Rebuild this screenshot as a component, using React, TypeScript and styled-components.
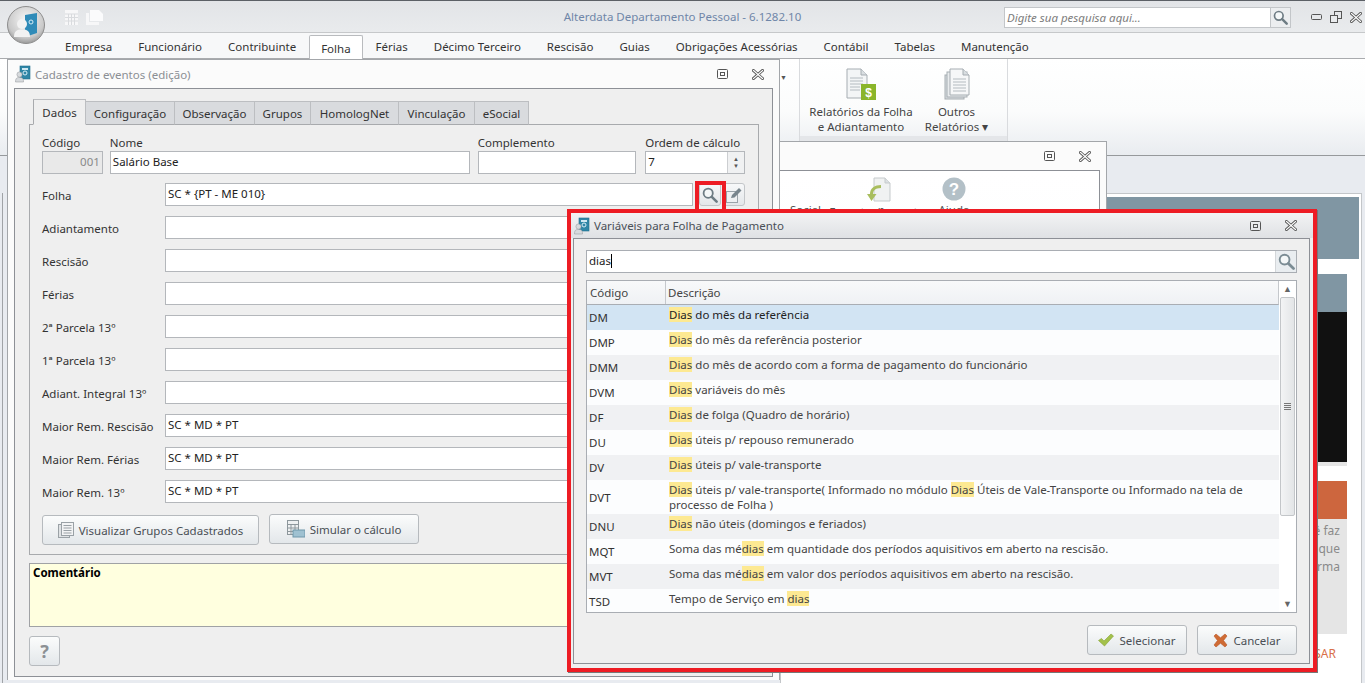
import React from 'react';
import styled, { createGlobalStyle } from 'styled-components';

const GlobalStyle = createGlobalStyle`
    html, body {
        margin: 0;
        padding: 0;
        background: #e8ebf0;
    }
    * {
        box-sizing: border-box;
    }
`;

const Page = styled.div`
    position: relative;
    width: 1365px;
    height: 683px;
    overflow: hidden;
    background: #e8ebf0;
    color: #333;
    font-family: "Noto Sans", "Open Sans", sans-serif;
    font-size: 11.5px;
`;

/* top of the application */
const TitleBar = styled.div`
    position: relative;
    height: 33px;
    display: flex;
    align-items: flex-start;
    border-top: 1px solid #5c6066;
    border-bottom: 1px solid #c6c8ca;
    background: linear-gradient(180deg, #e2e4e7 0%, #e9ebed 100%);
`;

const Orb = styled.div`
    position: absolute;
    left: 7px;
    top: 6px;
    width: 38px;
    height: 38px;
    z-index: 3;
`;

const QuickIcons = styled.div`
    display: flex;
    gap: 8px;
    margin: 9px 0 0 65px;
`;

const AppTitle = styled.div`
    position: absolute;
    left: 0;
    right: 0;
    top: 8px;
    text-align: center;
    color: #6f86a8;
    font-size: 11.5px;
`;

const TopSearch = styled.div`
    display: flex;
    width: 287px;
    height: 21px;
    margin: 6px 0 0 auto;
    border: 1px solid #c3c6c9;
    background: #fff;
`;

const TopSearchText = styled.div`
    flex: 1;
    padding: 2px 2px;
    color: #7d7d7d;
    font-style: italic;
`;

const TopSearchButton = styled.div`
    width: 20px;
    display: flex;
    align-items: center;
    justify-content: center;
    border-left: 1px solid #c3c6c9;
    background: #eceef0;
`;

const WindowButtons = styled.div`
    display: flex;
    gap: 8px;
    margin: 10px 3px 0 20px;
    align-items: center;
`;

const MenuBar = styled.div`
    height: 26px;
    display: flex;
    align-items: flex-end;
    padding-left: 52px;
    border-bottom: 1px solid #a9abae;
    background: #f7f8f9;
`;

const MenuItem = styled.div<{ $active?: boolean }>`
    height: ${({ $active }) => ($active ? '24px' : '22px')};
    margin-bottom: ${({ $active }) => ($active ? '-1px' : '0')};
    padding: ${({ $active }) => ($active ? '5px 11px 0' : '3px 13px 0')};
    color: #333;
    white-space: nowrap;
    background: ${({ $active }) => ($active ? '#fff' : 'transparent')};
    border: ${({ $active }) => ($active ? '1px solid #b9bbbe' : '0')};
    border-bottom: 0;
    border-radius: 2px 2px 0 0;
`;

const Ribbon = styled.div`
    height: 97px;
    display: flex;
    padding-left: 780px;
    border-bottom: 1px solid #96999c;
    background: linear-gradient(180deg, #ffffff 0%, #fbfcfc 55%, #e9ecf0 100%);
`;

const RibbonArrow = styled.div`
    width: 19px;
    padding: 14px 0 0 0;
    color: #555;
    font-size: 7px;
`;

const RibbonGroup = styled.div`
    width: 209px;
    display: flex;
    flex-direction: column;
    border-left: 1px solid #d9dbde;
    border-right: 1px solid #d9dbde;
`;

const RibbonItems = styled.div`
    flex: 1;
    display: flex;
    padding-left: 8px;
`;

const RibbonItem = styled.div<{ $width: number }>`
    width: ${({ $width }) => $width}px;
    display: flex;
    flex-direction: column;
    align-items: center;
    padding-top: 9px;
    text-align: center;
    line-height: 15px;
    color: #444;
`;

const RibbonItemLabel = styled.div`
    margin-top: 4px;
    white-space: nowrap;
`;

const RibbonGroupName = styled.div`
    height: 19px;
    background: #e4e6e9;
    color: #777;
    text-align: center;
    padding-top: 2px;
`;

/* windows on the desktop */
const AppWindow = styled.div<{ $left: number; $top: number; $width: number; $height: number }>`
    position: absolute;
    left: ${({ $left }) => $left}px;
    top: ${({ $top }) => $top}px;
    width: ${({ $width }) => $width}px;
    height: ${({ $height }) => $height}px;
    display: flex;
    flex-direction: column;
    background: #fbfbfb;
    border: 1px solid #a3a6aa;
    border-bottom: 0;
`;

const WindowTitle = styled.div<{ $active?: boolean }>`
    height: 28px;
    display: flex;
    align-items: center;
    gap: 4px;
    padding: 0 15px 0 7px;
    color: ${({ $active }) => ($active ? '#4a5058' : '#8b8f94')};
    background: ${({ $active }) => ($active ? 'linear-gradient(180deg, #f2f3f4 0%, #dfe1e4 100%)' : '#fbfbfb')};
`;

const WindowTitleText = styled.div`
    flex: 1;
    white-space: nowrap;
`;

const TitleButtons = styled.div`
    display: flex;
    align-items: center;
    gap: 24px;
`;

const WindowBody = styled.div`
    flex: 1;
    margin: 0 6px 3px 6px;
    padding: 10px 13px 0 14px;
    border: 1px solid #8d9096;
    background: #efefef;
    display: flex;
    flex-direction: column;
`;

const TabStrip = styled.div`
    display: flex;
    align-items: flex-end;
    height: 26px;
    margin-left: 4px;
    margin-bottom: -1px;
    position: relative;
    z-index: 1;
`;

const Tab = styled.div<{ $width: number; $active?: boolean }>`
    width: ${({ $width }) => $width}px;
    height: ${({ $active }) => ($active ? '26px' : '24px')};
    padding-top: ${({ $active }) => ($active ? '5px' : '4px')};
    text-align: center;
    white-space: nowrap;
    background: ${({ $active }) => ($active ? '#efefef' : '#d9dbde')};
    border: 1px solid #bcbec1;
    border-bottom: ${({ $active }) => ($active ? '1px solid #efefef' : '1px solid #a8aaad')};
    border-left: ${({ $active }) => ($active ? '1px solid #a8aaad' : '0')};
`;

const TabPanel = styled.div`
    height: 431px;
    padding: 11px 13px 0 12px;
    border: 1px solid #a8aaad;
    background: #efefef;
`;

const TopFields = styled.div`
    display: flex;
    margin-bottom: 9px;
`;

const TopField = styled.div<{ $width: number; $gap: number }>`
    width: ${({ $width }) => $width}px;
    margin-right: ${({ $gap }) => $gap}px;
`;

const TopLabel = styled.div`
    height: 15px;
    line-height: 14px;
    color: #333;
    white-space: nowrap;
`;

const TextBox = styled.div<{ $disabled?: boolean }>`
    flex: 1;
    height: 23px;
    line-height: 20px;
    padding: 0 2px;
    color: ${({ $disabled }) => ($disabled ? '#8a8a8a' : '#222')};
    text-align: ${({ $disabled }) => ($disabled ? 'right' : 'left')};
    background: ${({ $disabled }) => ($disabled ? '#e9e9e9' : '#fff')};
    border: 1px solid #b4b7bb;
    white-space: nowrap;
    overflow: hidden;
`;

const SpinBox = styled.div`
    display: flex;
    height: 23px;
    border: 1px solid #b4b7bb;
    background: #fff;
`;

const SpinValue = styled.div`
    flex: 1;
    line-height: 20px;
    padding-left: 2px;
    color: #222;
`;

const SpinArrows = styled.div`
    width: 17px;
    display: flex;
    flex-direction: column;
    align-items: center;
    justify-content: space-around;
    padding: 3px 0;
    border-left: 1px solid #ccced1;
    background: #f0f1f2;
    color: #555;
    font-size: 6px;
    line-height: 6px;
`;

const FormRows = styled.div`
    display: flex;
    flex-direction: column;
    gap: 10px;
`;

const FormRow = styled.div`
    display: flex;
    height: 23px;
`;

const FormLabel = styled.div`
    width: 123px;
    padding-top: 5px;
    color: #333;
    white-space: nowrap;
`;

const RowButton = styled.div<{ $gap: number }>`
    width: 22px;
    height: 23px;
    margin-left: ${({ $gap }) => $gap}px;
    display: flex;
    align-items: center;
    justify-content: center;
    border: 1px solid #c3c6c9;
    border-radius: 3px;
    background: linear-gradient(180deg, #f7f8f9 0%, #e4e7ea 100%);
`;

const PanelButtons = styled.div`
    display: flex;
    align-items: flex-start;
    gap: 10px;
    margin-top: 11px;
`;

const PushButton = styled.div<{ $width: number; $drop?: number }>`
    width: ${({ $width }) => $width}px;
    height: 30px;
    margin-top: ${({ $drop }) => $drop || 0}px;
    display: flex;
    align-items: center;
    justify-content: center;
    gap: 5px;
    color: #4a4f55;
    white-space: nowrap;
    border: 1px solid #b6babe;
    border-radius: 3px;
    background: linear-gradient(180deg, #fbfcfc 0%, #e3e7ea 100%);
`;

const CommentBox = styled.div`
    height: 64px;
    margin-top: 8px;
    padding: 1px 3px;
    border: 1px solid #a0a2a5;
    background: #ffffdf;
    color: #000;
    font-weight: 700;
`;

const WindowFooter = styled.div`
    display: flex;
    justify-content: space-between;
    margin-top: 9px;
`;

const HelpButton = styled(PushButton)`
    color: #8c9094;
    font-size: 18px;
    font-weight: 700;
`;

const SearchHighlight = styled.div`
    position: absolute;
    left: 695px;
    top: 181px;
    width: 31px;
    height: 30px;
    border: 4px solid #ed1c24;
    border-bottom: 0;
    z-index: 6;
`;

/* window behind the form */
const BackBody = styled.div`
    flex: 1;
    margin: 0 6px 0 6px;
    border: 1px solid #8d9096;
    background: linear-gradient(180deg, #ffffff 0%, #f7f8f9 100%);
    display: flex;
    padding-left: 279px;
`;

const BackItem = styled.div<{ $width: number }>`
    width: ${({ $width }) => $width}px;
    display: flex;
    flex-direction: column;
    align-items: center;
    padding-top: 6px;
    color: #555;
    white-space: nowrap;
`;

const BackItemLabel = styled.div`
    margin-top: 1px;
`;

/* page shown behind everything */
const WebPanel = styled.div`
    position: absolute;
    left: 780px;
    top: 193px;
    width: 582px;
    height: 500px;
    padding: 3px 2px 0 0;
    background: #fff;
    border: 1px solid #c3c6c9;
`;

const SlateHero = styled.div`
    height: 62px;
    background: #8096a3;
`;

const NewsCard = styled.div`
    margin: 15px 12px 0 0;
`;

const SlateCaption = styled.div`
    height: 38px;
    background: #8096a3;
`;

const BlackVideo = styled.div`
    height: 150px;
    background: #111;
    border-bottom: 0;
`;

const GreyStrip = styled.div`
    height: 4px;
    background: #e5e5e5;
`;

const OrangeBand = styled.div`
    height: 38px;
    margin-top: 15px;
    background: #cd663e;
`;

const GreyText = styled.div`
    height: 115px;
    padding: 3px 7px 0 0;
    background: #e5e5e5;
    color: #8a8a8a;
    font-size: 12px;
    line-height: 18px;
    text-align: right;
`;

const OrangeLink = styled.div`
    margin-top: 11px;
    padding-right: 11px;
    color: #d9704a;
    font-size: 12px;
    text-align: right;
`;

const SideLine = styled.div`
    position: absolute;
    left: 2px;
    top: 193px;
    width: 5px;
    height: 490px;
    border-left: 1px solid #a0a3a7;
    background: #e8ebf0;
`;

/* dialog */
const Dialog = styled.div`
    position: absolute;
    left: 567px;
    top: 209px;
    width: 750px;
    height: 463px;
    display: flex;
    flex-direction: column;
    border: 4px solid #ed1c24;
    box-shadow: 1px 1px 0 #777;
    background: #efefef;
    z-index: 5;
`;

const DialogTitle = styled(WindowTitle)`
    height: 25px;
    padding: 0 16px 0 3px;
`;

const DialogBody = styled.div`
    flex: 1;
    margin: 0 3px 4px 2px;
    padding: 11px 12px 0 12px;
    border: 1px solid #8d9096;
    display: flex;
    flex-direction: column;
`;

const SearchRow = styled.div`
    display: flex;
    height: 23px;
    border: 1px solid #a9adb3;
    background: #fff;
`;

const SearchText = styled.div`
    flex: 1;
    line-height: 20px;
    padding-left: 2px;
    color: #222;
`;

const Caret = styled.span`
    display: inline-block;
    width: 1px;
    height: 14px;
    margin-left: 0;
    vertical-align: -3px;
    background: #000;
`;

const SearchButton = styled.div`
    width: 21px;
    display: flex;
    align-items: center;
    justify-content: center;
    border-left: 1px solid #d3d6d9;
    background: #e9edf0;
`;

const Grid = styled.div`
    display: flex;
    height: 333px;
    margin-top: 7px;
    border: 1px solid #a9adb3;
    background: #fff;
    overflow: hidden;
`;

const GridMain = styled.div`
    width: 697px;
    display: flex;
    flex-direction: column;
`;

const GridHeader = styled.div`
    display: flex;
    height: 24px;
    flex: none;
    border-bottom: 1px solid #a9adb3;
    border-right: 1px solid #c5c8cc;
    background: linear-gradient(180deg, #f8f9fa 0%, #eff1f4 100%);
    color: #444;
    line-height: 23px;
`;

const HeaderCode = styled.div`
    width: 79px;
    padding-left: 3px;
    border-right: 1px solid #c5c8cc;
`;

const HeaderDescription = styled.div`
    padding-left: 2px;
`;

const GridRow = styled.div<{ $tall?: boolean; $tone: 'selected' | 'white' | 'grey' }>`
    display: flex;
    flex: none;
    height: ${({ $tall }) => ($tall ? '34px' : '25px')};
    background: ${({ $tone }) => ($tone === 'selected' ? '#d2e4f3' : $tone === 'grey' ? '#f0f1f3' : '#fcfdfe')};
`;

const CodeCell = styled.div`
    width: 80px;
    flex: none;
    display: flex;
    align-items: center;
    padding-left: 2px;
    color: #333;
`;

const DescriptionCell = styled.div<{ $dark?: boolean }>`
    flex: 1;
    padding: 2px 0 0 2px;
    line-height: 15px;
    color: ${({ $dark }) => ($dark ? '#222' : '#444')};
`;

const Match = styled.span`
    background: #fde992;
`;

const ScrollTrack = styled.div`
    flex: 1;
    display: flex;
    flex-direction: column;
    align-items: center;
    background: #fff;
    padding: 0 1px;
`;

const ScrollArrow = styled.div`
    height: 16px;
    line-height: 15px;
    flex: none;
    color: #666;
    font-size: 9px;
`;

const ScrollThumb = styled.div`
    width: 15px;
    height: 219px;
    flex: none;
    display: flex;
    flex-direction: column;
    align-items: center;
    justify-content: center;
    gap: 1px;
    border: 1px solid #c3c6c9;
    border-radius: 2px;
    background: linear-gradient(90deg, #f3f4f5 0%, #e3e5e7 100%);
`;

const GripLine = styled.div`
    width: 7px;
    height: 1px;
    background: #777;
`;

const ScrollSpacer = styled.div`
    flex: 1;
`;

const DialogButtons = styled.div`
    display: flex;
    justify-content: flex-end;
    gap: 10px;
    margin-top: 12px;
`;

const Restore = () => (
    <svg width="11" height="10" viewBox="0 0 11 10">
        <rect x="0.5" y="0.5" width="10" height="9" rx="1" fill="none" stroke="#555" />
        <rect x="3.5" y="3.5" width="4" height="3" fill="none" stroke="#555" />
    </svg>
);

const CloseX = () => (
    <svg width="12" height="11" viewBox="0 0 12 11">
        <path d="M1.5 1.5 L10.5 9.5 M10.5 1.5 L1.5 9.5" stroke="#555" strokeWidth="3" strokeLinecap="square" />
        <path d="M1.5 1.5 L10.5 9.5 M10.5 1.5 L1.5 9.5" stroke="#fff" strokeWidth="1.2" strokeLinecap="square" />
    </svg>
);

const WindowIcon = () => (
    <svg width="16" height="18" viewBox="0 0 16 18">
        <rect x="5" y="1" width="10" height="13" fill="#2f86a6" stroke="#1f6f8e" strokeWidth="0.6" />
        <rect x="7" y="3" width="6" height="2" fill="#cfe8f2" />
        <circle cx="10" cy="8" r="2" fill="none" stroke="#d6eef7" />
        <circle cx="4.5" cy="9.5" r="2.6" fill="#d7dadd" stroke="#8f9396" strokeWidth="0.5" />
        <path d="M0.5 17 C0.5 13 2 12.5 4.5 12.5 C7 12.5 8.5 13 8.5 17 Z" fill="#d7dadd" stroke="#8f9396" strokeWidth="0.5" />
    </svg>
);

const Magnifier = ({ size = 16, color = '#6e7c84' }: { size?: number; color?: string }) => (
    <svg width={size} height={size} viewBox="0 0 16 16">
        <circle cx="6.2" cy="6.2" r="4.6" fill="#f4f7f8" stroke={color} strokeWidth="1.8" />
        <path d="M9.8 9.8 L14.6 14.6" stroke={color} strokeWidth="2.6" strokeLinecap="round" />
    </svg>
);

const EditIcon = () => (
    <svg width="18" height="18" viewBox="0 0 18 18">
        <rect x="1.5" y="5.5" width="11" height="11" fill="#eef0f2" stroke="#9aa3a9" />
        <path d="M6 12 L7 9 L14 2 L16.5 4.5 L9.5 11.5 Z" fill="#78858d" />
    </svg>
);

const OrbLogo = () => (
    <svg width="38" height="38" viewBox="0 0 38 38">
        <defs>
            <radialGradient id="orbFill" cx="50%" cy="35%" r="70%">
                <stop offset="0%" stopColor="#f6f6f6" />
                <stop offset="70%" stopColor="#c9c9c9" />
                <stop offset="100%" stopColor="#8b8b8b" />
            </radialGradient>
        </defs>
        <circle cx="19" cy="19" r="18.5" fill="url(#orbFill)" stroke="#8d8d8d" />
        <path d="M18 9 L30 7 V27 L18 31 Z" fill="#2f8bb8" />
        <circle cx="24" cy="16" r="2" fill="none" stroke="#d6eef7" />
        <circle cx="15" cy="18" r="5" fill="#f2f2f2" />
        <path d="M7 31 C7 25 10 23.5 15 23.5 C20 23.5 23 25 23 31 Z" fill="#f2f2f2" />
    </svg>
);

const GridQuick = () => (
    <svg width="13" height="15" viewBox="0 0 13 15">
        <rect width="13" height="15" fill="#f7f7f8" />
        <path d="M0 4H13M0 7.5H13M0 11H13M3.5 4V15M6.5 4V15M9.5 4V15" stroke="#d9dbde" />
    </svg>
);

const DocQuick = () => (
    <svg width="17" height="15" viewBox="0 0 17 15">
        <path d="M0 3H3V12H13V15H0Z" fill="#f7f7f8" />
        <path d="M4 0H13L17 4V11H4Z" fill="#fbfbfc" />
    </svg>
);

const ReportIcon = () => (
    <svg width="30" height="32" viewBox="0 0 30 32">
        <path d="M1 1 H15 L21 7 V30 H1 Z" fill="#f3f5f6" stroke="#a6adb2" />
        <path d="M15 1 V7 H21" fill="#d9dee1" stroke="#a6adb2" />
        <path d="M4 10H17M4 13H17M4 16H17M4 19H14M4 22H14" stroke="#b4bbc0" />
        <rect x="15" y="16" width="15" height="16" fill="#8ab52a" />
        <text x="22.5" y="28.5" fontSize="12" fontWeight="700" fill="#fff" textAnchor="middle" fontFamily="Liberation Sans">$</text>
    </svg>
);

const StackIcon = () => (
    <svg width="26" height="32" viewBox="0 0 26 32">
        <rect x="1" y="7" width="19" height="24" fill="#d9dde0" stroke="#a6adb2" />
        <rect x="3" y="4" width="20" height="25" fill="#e9ecee" stroke="#a6adb2" />
        <path d="M6 1 H19 L25 7 V27 H6 Z" fill="#f6f7f8" stroke="#a6adb2" />
        <path d="M19 1 V7 H25" fill="#d9dee1" stroke="#a6adb2" />
        <path d="M9 11H22M9 14H22M9 17H22M9 20H22M9 23H22" stroke="#b4bbc0" />
    </svg>
);

const ExportIcon = () => (
    <svg width="24" height="26" viewBox="0 0 24 26">
        <path d="M7 1 H18 L23 6 V24 H7 Z" fill="#f0f2f2" stroke="#c5cacc" />
        <path d="M18 1 V6 H23" fill="#dce0e2" stroke="#c5cacc" />
        <path d="M14 12 C8 12 6 15 6 18 H9.5 L4.5 25 L0 18 H3 C3 12 8 9 14 9 Z" fill="#a9be5e" transform="translate(0 -1)" />
    </svg>
);

const HelpCircle = () => (
    <svg width="24" height="24" viewBox="0 0 24 24">
        <circle cx="12" cy="12" r="11.5" fill="#b3c0c7" />
        <text x="12" y="18" fontSize="17" fontWeight="700" fill="#fff" textAnchor="middle" fontFamily="Liberation Sans">?</text>
    </svg>
);

const GroupsIcon = () => (
    <svg width="16" height="16" viewBox="0 0 16 16">
        <rect x="0.5" y="2.5" width="11" height="13" fill="#dfe2e4" stroke="#9aa1a6" />
        <rect x="3.5" y="0.5" width="12" height="13" fill="#f2f3f4" stroke="#9aa1a6" />
        <path d="M5.5 3.5H13.5M5.5 6H13.5M5.5 8.5H13.5M5.5 11H13.5" stroke="#9aa1a6" />
    </svg>
);

const CalcIcon = () => (
    <svg width="18" height="18" viewBox="0 0 18 18">
        <rect x="0.5" y="0.5" width="11" height="14" fill="#eef0f1" stroke="#8d979c" />
        <path d="M0.5 4.5H11.5M0.5 8H11.5M0.5 11.5H11.5M4 4.5V14.5M8 4.5V14.5" stroke="#8d979c" />
        <rect x="6" y="10" width="12" height="7" fill="#9fc1d1" stroke="#6f97aa" />
    </svg>
);

const CheckIcon = () => (
    <svg width="16" height="14" viewBox="0 0 16 14">
        <path d="M0.5 7.5 L3.5 5.5 L6 8 L13 1 L15.5 3 L6.5 13 Z" fill="#a3c14a" stroke="#86a338" strokeWidth="0.6" />
    </svg>
);

const CancelIcon = () => (
    <svg width="15" height="15" viewBox="0 0 15 15">
        <path d="M1 3 L3 1 L7.5 4.8 L12 1 L14 3 L10.5 7.5 L14 12 L12 14 L7.5 10.2 L3 14 L1 12 L4.5 7.5 Z" fill="#cf6b34" stroke="#b8582a" strokeWidth="0.6" strokeLinejoin="round" />
    </svg>
);

const MENU = ['Empresa', 'Funcionário', 'Contribuinte', 'Folha', 'Férias', 'Décimo Terceiro', 'Rescisão', 'Guias', 'Obrigações Acessórias', 'Contábil', 'Tabelas', 'Manutenção'];

const TABS: [string, number][] = [
    ['Dados', 53], ['Configuração', 89], ['Observação', 80], ['Grupos', 56],
    ['HomologNet', 88], ['Vinculação', 76], ['eSocial', 54],
];

const FORM_ROWS: [string, string][] = [
    ['Folha', 'SC * {PT - ME 010}'],
    ['Adiantamento', ''],
    ['Rescisão', ''],
    ['Férias', ''],
    ['2ª Parcela 13º', ''],
    ['1ª Parcela 13º', ''],
    ['Adiant. Integral 13º', ''],
    ['Maior Rem. Rescisão', 'SC * MD * PT'],
    ['Maior Rem. Férias', 'SC * MD * PT'],
    ['Maior Rem. 13º', 'SC * MD * PT'],
];

const M = Match;

const VARIABLES: { code: string; tall?: boolean; text: React.ReactNode }[] = [
    { code: 'DM', text: <><M>Dias</M> do mês da referência</> },
    { code: 'DMP', text: <><M>Dias</M> do mês da referência posterior</> },
    { code: 'DMM', text: <><M>Dias</M> do mês de acordo com a forma de pagamento do funcionário</> },
    { code: 'DVM', text: <><M>Dias</M> variáveis do mês</> },
    { code: 'DF', text: <><M>Dias</M> de folga (Quadro de horário)</> },
    { code: 'DU', text: <><M>Dias</M> úteis p/ repouso remunerado</> },
    { code: 'DV', text: <><M>Dias</M> úteis p/ vale-transporte</> },
    { code: 'DVT', tall: true, text: <><M>Dias</M> úteis p/ vale-transporte( Informado no módulo <M>Dias</M> Úteis de Vale-Transporte ou Informado na tela de processo de Folha )</> },
    { code: 'DNU', text: <><M>Dias</M> não úteis (domingos e feriados)</> },
    { code: 'MQT', text: <>Soma das mé<M>dias</M> em quantidade dos períodos aquisitivos em aberto na rescisão.</> },
    { code: 'MVT', text: <>Soma das mé<M>dias</M> em valor dos períodos aquisitivos em aberto na rescisão.</> },
    { code: 'TSD', text: <>Tempo de Serviço em <M>dias</M></> },
];

const rowTone = (i: number) => (i === 0 ? 'selected' : i % 2 === 0 ? 'grey' : 'white');

export default function App() {
    return (
        <Page>
            <GlobalStyle />
            <TitleBar>
                <QuickIcons>
                    <GridQuick />
                    <DocQuick />
                </QuickIcons>
                <AppTitle>Alterdata Departamento Pessoal - 6.1282.10</AppTitle>
                <TopSearch>
                    <TopSearchText>Digite sua pesquisa aqui...</TopSearchText>
                    <TopSearchButton><Magnifier size={15} /></TopSearchButton>
                </TopSearch>
                <WindowButtons>
                    <svg width="11" height="6" viewBox="0 0 11 6"><rect x="0.5" y="0.5" width="10" height="5" rx="1" fill="none" stroke="#555" /></svg>
                    <svg width="12" height="12" viewBox="0 0 12 12"><rect x="4.5" y="0.5" width="7" height="7" fill="none" stroke="#555" /><rect x="0.5" y="4.5" width="7" height="7" fill="#e9ebed" stroke="#555" /></svg>
                    <CloseX />
                </WindowButtons>
            </TitleBar>
            <Orb><OrbLogo /></Orb>
            <MenuBar>
                {MENU.map((m) => (
                    <MenuItem key={m} $active={m === 'Folha'}>{m}</MenuItem>
                ))}
            </MenuBar>
            <Ribbon>
                <RibbonArrow>▼</RibbonArrow>
                <RibbonGroup>
                    <RibbonItems>
                        <RibbonItem $width={106}>
                            <ReportIcon />
                            <RibbonItemLabel>Relatórios da Folha<br />e Adiantamento</RibbonItemLabel>
                        </RibbonItem>
                        <RibbonItem $width={85}>
                            <StackIcon />
                            <RibbonItemLabel>Outros<br />Relatórios ▾</RibbonItemLabel>
                        </RibbonItem>
                    </RibbonItems>
                    <RibbonGroupName>Relatórios Folha</RibbonGroupName>
                </RibbonGroup>
            </Ribbon>

            <SideLine />

            <WebPanel>
                <SlateHero />
                <NewsCard>
                    <SlateCaption />
                    <BlackVideo />
                    <GreyStrip />
                    <OrangeBand />
                    <GreyText>você faz<br />sistema que<br />de forma</GreyText>
                    <OrangeLink>ACESSAR</OrangeLink>
                </NewsCard>
            </WebPanel>

            <AppWindow $left={500} $top={141} $width={607} $height={520}>
                <WindowTitle>
                    <WindowTitleText />
                    <TitleButtons><Restore /><CloseX /></TitleButtons>
                </WindowTitle>
                <BackBody>
                    <BackItem $width={37}>
                        <svg width="1" height="24" />
                        <BackItemLabel>Social</BackItemLabel>
                    </BackItem>
                    <BackItem $width={110}>
                        <ExportIcon />
                        <BackItemLabel>Exportar/Importar</BackItemLabel>
                    </BackItem>
                    <BackItem $width={40}>
                        <HelpCircle />
                        <BackItemLabel>Ajuda</BackItemLabel>
                    </BackItem>
                </BackBody>
            </AppWindow>

            <AppWindow $left={7} $top={59} $width={773} $height={621}>
                <WindowTitle>
                    <WindowIcon />
                    <WindowTitleText>Cadastro de eventos (edição)</WindowTitleText>
                    <TitleButtons><Restore /><CloseX /></TitleButtons>
                </WindowTitle>
                <WindowBody>
                    <TabStrip>
                        {TABS.map(([name, width], i) => (
                            <Tab key={name} $width={width} $active={i === 0}>{name}</Tab>
                        ))}
                    </TabStrip>
                    <TabPanel>
                        <TopFields>
                            <TopField $width={61} $gap={7}>
                                <TopLabel>Código</TopLabel>
                                <TextBox $disabled>001</TextBox>
                            </TopField>
                            <TopField $width={361} $gap={8}>
                                <TopLabel>Nome</TopLabel>
                                <TextBox>Salário Base</TextBox>
                            </TopField>
                            <TopField $width={159} $gap={9}>
                                <TopLabel>Complemento</TopLabel>
                                <TextBox />
                            </TopField>
                            <TopField $width={100} $gap={0}>
                                <TopLabel>Ordem de cálculo</TopLabel>
                                <SpinBox>
                                    <SpinValue>7</SpinValue>
                                    <SpinArrows><span>▲</span><span>▼</span></SpinArrows>
                                </SpinBox>
                            </TopField>
                        </TopFields>
                        <FormRows>
                            {FORM_ROWS.map(([label, value]) => (
                                <FormRow key={label}>
                                    <FormLabel>{label}</FormLabel>
                                    <TextBox>{value}</TextBox>
                                    <RowButton $gap={6}><Magnifier /></RowButton>
                                    <RowButton $gap={2}><EditIcon /></RowButton>
                                </FormRow>
                            ))}
                        </FormRows>
                        <PanelButtons>
                            <PushButton $width={217} $drop={1}><GroupsIcon />Visualizar Grupos Cadastrados</PushButton>
                            <PushButton $width={150}><CalcIcon />Simular o cálculo</PushButton>
                        </PanelButtons>
                    </TabPanel>
                    <CommentBox>Comentário</CommentBox>
                    <WindowFooter>
                        <HelpButton $width={31}>?</HelpButton>
                        <PushButton $width={100}>Fechar</PushButton>
                    </WindowFooter>
                </WindowBody>
            </AppWindow>

            <SearchHighlight />

            <Dialog>
                <DialogTitle $active>
                    <WindowIcon />
                    <WindowTitleText>Variáveis para Folha de Pagamento</WindowTitleText>
                    <TitleButtons><Restore /><CloseX /></TitleButtons>
                </DialogTitle>
                <DialogBody>
                    <SearchRow>
                        <SearchText>dias<Caret /></SearchText>
                        <SearchButton><Magnifier size={17} color="#7b8c94" /></SearchButton>
                    </SearchRow>
                    <Grid>
                        <GridMain>
                            <GridHeader>
                                <HeaderCode>Código</HeaderCode>
                                <HeaderDescription>Descrição</HeaderDescription>
                            </GridHeader>
                            {VARIABLES.map((v, i) => (
                                <GridRow key={v.code} $tall={v.tall} $tone={rowTone(i)}>
                                    <CodeCell>{v.code}</CodeCell>
                                    <DescriptionCell $dark={i === 0}>{v.text}</DescriptionCell>
                                </GridRow>
                            ))}
                        </GridMain>
                        <ScrollTrack>
                            <ScrollArrow>▲</ScrollArrow>
                            <ScrollThumb>
                                <GripLine /><GripLine /><GripLine /><GripLine />
                            </ScrollThumb>
                            <ScrollSpacer />
                            <ScrollArrow>▼</ScrollArrow>
                        </ScrollTrack>
                    </Grid>
                    <DialogButtons>
                        <PushButton $width={100}><CheckIcon />Selecionar</PushButton>
                        <PushButton $width={100}><CancelIcon />Cancelar</PushButton>
                    </DialogButtons>
                </DialogBody>
            </Dialog>
        </Page>
    );
}
